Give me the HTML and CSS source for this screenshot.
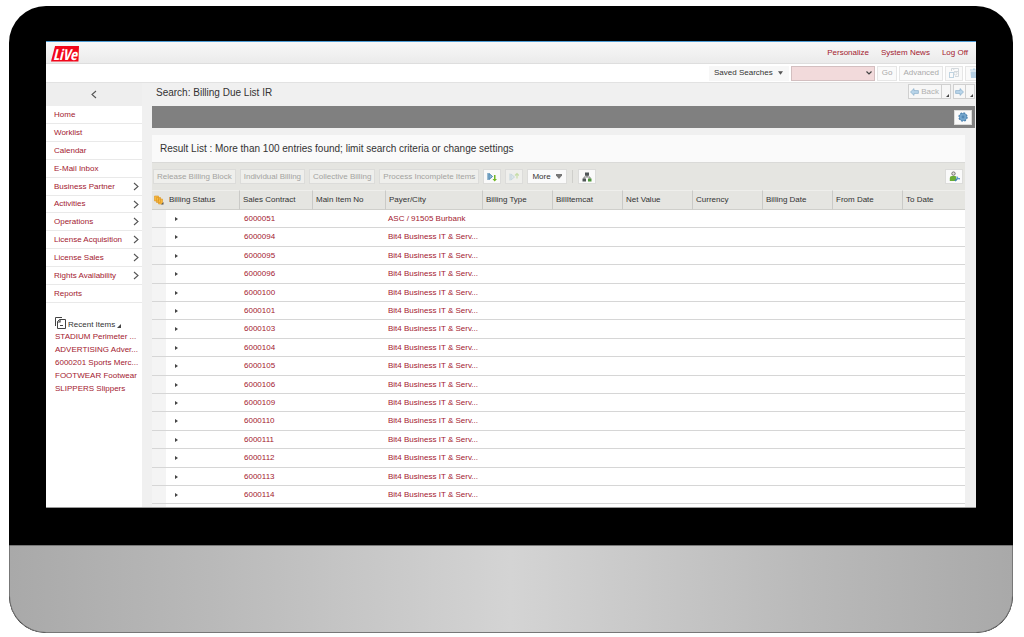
FILE: index.html
```html
<!DOCTYPE html>
<html lang="en">
<head>
<meta charset="utf-8">
<title>Search: Billing Due List IR</title>
<link rel="stylesheet" href="styles.css">
</head>
<body>
<svg class="defs" aria-hidden="true">
  <symbol id="chev" viewBox="0 0 6 9"><path d="M1 1l4 3.500-4 3.500" fill="none" stroke="#555" stroke-width="1.100"/></symbol>
  <symbol id="corner" viewBox="0 0 4 4"><path d="M4 0v4H0z" fill="#444"/></symbol>
  <symbol id="arrow" viewBox="0 0 9 8"><path d="M8.500 4L5 .6v2H.6v2.800H5v2z" fill="#b9d5ea" stroke="#86acc9" stroke-width=".7"/></symbol>
</svg>
<div class="device">
  <div class="bezel">
    <div class="screen">
      <header class="topbar">
        <a class="logo" href="#">LiVe</a>
        <nav class="toplinks"><a href="#">Personalize</a><a href="#">System News</a><a href="#">Log Off</a></nav>
      </header>
      <form class="searchbar">
        <button type="button" class="saved">Saved Searches <svg width="5" height="4" viewBox="0 0 6 4"><path d="M0 0h6L3 4z" fill="#555"/></svg></button>
        <span class="selwrap"><select aria-label="Saved search"><option></option></select><svg width="6" height="4" viewBox="0 0 6 4"><path d="M.5.5L3 3 5.500.5" fill="none" stroke="#444" stroke-width="1.200"/></svg></span>
        <button type="button" class="btn off go">Go</button>
        <button type="button" class="btn off">Advanced</button>
        <button type="button" class="btn icon" aria-label="Save search"><svg width="10" height="10" viewBox="0 0 10 10" fill="none" stroke="#d3d8dc"><path d="M2.500 3V.5h7v8H6M5 3.500h4M4 1.500l2-1"/><rect x=".5" y="4.500" width="4" height="5" stroke="#bfd3e1"/><circle cx="6.500" cy="5.500" r="1.500"/></svg></button>
        <button type="button" class="btn icon" aria-label="Delete search"><svg width="10" height="10" viewBox="0 0 10 10"><path d="M1 1.500h3V.5h2v1h3v1H1zM1.500 3.500h7L8 10H2z" fill="#b5cfe3"/></svg></button>
      </form>
      <div class="body">
        <aside class="side">
          <button type="button" class="collapse" aria-label="Collapse navigation"><svg class="flip" width="6" height="9"><use href="#chev"/></svg></button>
          <nav>
            <ul class="menu">
              <li><a href="#">Home</a></li>
              <li><a href="#">Worklist</a></li>
              <li><a href="#">Calendar</a></li>
              <li><a href="#">E-Mail Inbox</a></li>
              <li><a href="#">Business Partner<svg width="6" height="9"><use href="#chev"/></svg></a></li>
              <li><a href="#">Activities<svg width="6" height="9"><use href="#chev"/></svg></a></li>
              <li><a href="#">Operations<svg width="6" height="9"><use href="#chev"/></svg></a></li>
              <li><a href="#">License Acquisition<svg width="6" height="9"><use href="#chev"/></svg></a></li>
              <li><a href="#">License Sales<svg width="6" height="9"><use href="#chev"/></svg></a></li>
              <li><a href="#">Rights Availability<svg width="6" height="9"><use href="#chev"/></svg></a></li>
              <li><a href="#">Reports</a></li>
            </ul>
          </nav>
          <section class="recent">
            <h2><svg width="11" height="12" viewBox="0 0 11 12" fill="none" stroke="#444"><path d="M.5 9V.5H7M1 .5h1"/><path d="M4.500 2.500h6v9h-8v-7z" fill="#fff"/><path d="M5 2.500v2.500H2.500M5 8.500h3" stroke-width="1.200"/></svg><span>Recent Items</span><svg width="4" height="4"><use href="#corner"/></svg></h2>
            <ul>
              <li><a href="#">STADIUM Perimeter ...</a></li>
              <li><a href="#">ADVERTISING Adver...</a></li>
              <li><a href="#">6000201 Sports Merc...</a></li>
              <li><a href="#">FOOTWEAR Footwear</a></li>
              <li><a href="#">SLIPPERS Slippers</a></li>
            </ul>
          </section>
        </aside>
        <main class="main">
          <div class="titlebar">
            <h1>Search: Billing Due List IR</h1>
            <div class="history">
              <div class="group">
                <button type="button"><svg class="flip" width="9" height="8"><use href="#arrow"/></svg>Back</button>
                <button type="button" class="drop" aria-label="Back history"><svg width="3" height="3" viewBox="0 0 4 4"><use href="#corner"/></svg></button>
              </div>
              <div class="group">
                <button type="button" class="fwd" aria-label="Forward"><svg width="9" height="8"><use href="#arrow"/></svg></button>
                <button type="button" class="drop" aria-label="Forward history"><svg width="3" height="3" viewBox="0 0 4 4"><use href="#corner"/></svg></button>
              </div>
            </div>
          </div>
          <div class="criteria">
            <button type="button" class="btn icon" aria-label="Settings"><svg width="10" height="10" viewBox="0 0 10 10"><circle cx="5" cy="5" r="3.900" fill="#5c92bd" stroke="#4a80ae" stroke-width="1.600" stroke-dasharray="1.700 1.360"/><circle cx="5" cy="5" r="3.400" fill="#74a5cb"/><circle cx="5" cy="5" r="1.400" fill="#5288b5"/></svg></button>
          </div>
          <section class="results">
            <h2>Result List : More than 100 entries found; limit search criteria or change settings</h2>
            <div class="tools">
              <button type="button" class="btn dim">Release Billing Block</button>
              <button type="button" class="btn dim">Individual Billing</button>
              <button type="button" class="btn dim">Collective Billing</button>
              <button type="button" class="btn dim">Process Incomplete Items</button>
              <button type="button" class="btn icon" aria-label="Sort ascending"><svg width="10" height="10" viewBox="0 0 10 10"><path d="M1 1v7" stroke="#3f7eaa"/><path d="M2 1.500L5.500 4.500 2 7.500z" fill="#8fbad8" stroke="#3f7eaa" stroke-width=".9"/><path d="M7 3h1.500v4H10L7.700 9.500 5.500 7H7z" fill="#72b626"/></svg></button>
              <button type="button" class="btn icon dim" aria-label="Sort descending"><svg width="10" height="10" viewBox="0 0 10 10"><path d="M1 1.500v7" stroke="#c3d5dd"/><path d="M2 2L5.500 5 2 8z" fill="#dce6ea" stroke="#c3d5dd" stroke-width=".9"/><path d="M8 6.500V1.500M6 3.500l2-2 2 2" fill="none" stroke="#c6dda8" stroke-width="1.200"/></svg></button>
              <button type="button" class="btn more">More <svg width="6" height="5" viewBox="0 0 6 5"><path d="M0 0h6v1.500L3 5 0 1.500z" fill="#777"/></svg></button>
              <span class="sep"></span>
              <button type="button" class="btn icon" aria-label="Hierarchy"><svg width="10" height="10" viewBox="0 0 10 10"><path d="M2 7V5h6v2M5 5V3" fill="none" stroke="#666" stroke-width=".8"/><path d="M3 .5h4v3.200H3zM.5 6.500h3.500v3H.5z" fill="#4f5557"/><path d="M6 6.500h3.500v3H6z" fill="#4e963a"/></svg></button>
              <button type="button" class="btn icon user" aria-label="Personalize table"><svg width="11" height="11" viewBox="0 0 11 11"><circle cx="4.500" cy="2.600" r="1.700" fill="#e4e1dc" stroke="#666" stroke-width=".9"/><path d="M.8 10V7q0-2 2-2h3.500q1 0 1 2v3z" fill="#6aad37"/><path d="M6 10l3-3" stroke="#3f82b8" stroke-width="1.500"/><path d="M8 5.500q0 2.500 3 2.200" fill="none" stroke="#5a9ace" stroke-width="1.300"/></svg></button>
            </div>
            <table>
              <colgroup><col class="c-sel"><col class="c-id"><col class="c-id"><col class="c-id"><col class="c-payer"><col class="c-std"><col class="c-std"><col class="c-std"><col class="c-std"><col class="c-std"><col class="c-std"><col></colgroup>
              <thead><tr>
                <th class="pick"><svg width="10" height="10" viewBox="0 0 10 10" fill="#f7b940" stroke="#dc9524" stroke-width=".6"><path d="M.5 1h4v5h-4zM2.500 2.500h4v5h-4zM4.500 4h4v5h-4z"/><path d="M9.500 7v2.500H7z" fill="#555" stroke="none"/></svg></th>
                <th class="first">Billing Status</th><th>Sales Contract</th><th>Main Item No</th><th>Payer/City</th><th>Billing Type</th><th>BillItemcat</th><th>Net Value</th><th>Currency</th><th>Billing Date</th><th>From Date</th><th>To Date</th>
              </tr></thead>
              <tbody>
                <tr><td></td><td class="exp"></td><td><a href="#">6000051</a></td><td></td><td class="payer"><a href="#">ASC / 91505 Burbank</a></td><td colspan="7"></td></tr>
                <tr><td></td><td class="exp"></td><td><a href="#">6000094</a></td><td></td><td class="payer"><a href="#">Bit4 Business IT &amp; Serv...</a></td><td colspan="7"></td></tr>
                <tr><td></td><td class="exp"></td><td><a href="#">6000095</a></td><td></td><td class="payer"><a href="#">Bit4 Business IT &amp; Serv...</a></td><td colspan="7"></td></tr>
                <tr><td></td><td class="exp"></td><td><a href="#">6000096</a></td><td></td><td class="payer"><a href="#">Bit4 Business IT &amp; Serv...</a></td><td colspan="7"></td></tr>
                <tr><td></td><td class="exp"></td><td><a href="#">6000100</a></td><td></td><td class="payer"><a href="#">Bit4 Business IT &amp; Serv...</a></td><td colspan="7"></td></tr>
                <tr><td></td><td class="exp"></td><td><a href="#">6000101</a></td><td></td><td class="payer"><a href="#">Bit4 Business IT &amp; Serv...</a></td><td colspan="7"></td></tr>
                <tr><td></td><td class="exp"></td><td><a href="#">6000103</a></td><td></td><td class="payer"><a href="#">Bit4 Business IT &amp; Serv...</a></td><td colspan="7"></td></tr>
                <tr><td></td><td class="exp"></td><td><a href="#">6000104</a></td><td></td><td class="payer"><a href="#">Bit4 Business IT &amp; Serv...</a></td><td colspan="7"></td></tr>
                <tr><td></td><td class="exp"></td><td><a href="#">6000105</a></td><td></td><td class="payer"><a href="#">Bit4 Business IT &amp; Serv...</a></td><td colspan="7"></td></tr>
                <tr><td></td><td class="exp"></td><td><a href="#">6000106</a></td><td></td><td class="payer"><a href="#">Bit4 Business IT &amp; Serv...</a></td><td colspan="7"></td></tr>
                <tr><td></td><td class="exp"></td><td><a href="#">6000109</a></td><td></td><td class="payer"><a href="#">Bit4 Business IT &amp; Serv...</a></td><td colspan="7"></td></tr>
                <tr><td></td><td class="exp"></td><td><a href="#">6000110</a></td><td></td><td class="payer"><a href="#">Bit4 Business IT &amp; Serv...</a></td><td colspan="7"></td></tr>
                <tr><td></td><td class="exp"></td><td><a href="#">6000111</a></td><td></td><td class="payer"><a href="#">Bit4 Business IT &amp; Serv...</a></td><td colspan="7"></td></tr>
                <tr><td></td><td class="exp"></td><td><a href="#">6000112</a></td><td></td><td class="payer"><a href="#">Bit4 Business IT &amp; Serv...</a></td><td colspan="7"></td></tr>
                <tr><td></td><td class="exp"></td><td><a href="#">6000113</a></td><td></td><td class="payer"><a href="#">Bit4 Business IT &amp; Serv...</a></td><td colspan="7"></td></tr>
                <tr><td></td><td class="exp"></td><td><a href="#">6000114</a></td><td></td><td class="payer"><a href="#">Bit4 Business IT &amp; Serv...</a></td><td colspan="7"></td></tr>
                <tr><td></td><td colspan="11"></td></tr>
              </tbody>
            </table>
          </section>
        </main>
      </div>
    </div>
  </div>
  <div class="chin"></div>
</div>
</body>
</html>
```
FILE: styles.css
```css
* { box-sizing: border-box; }
body {
  margin: 0;
  padding: 6px 11px 4px 9px;
  height: 100vh;
  background: #fff;
  color: #333;
  font: 8px/10px "Liberation Sans", Arial, sans-serif;
}
h1, h2, ul { margin: 0; padding: 0; font-weight: normal; }
ul { list-style: none; }
a { color: #a3202f; text-decoration: none; }
button, select { margin: 0; font: inherit; color: inherit; }
svg { flex: none; display: block; }
.defs { display: none; }
.flip { transform: scaleX(-1); }

.device {
  display: flex;
  flex-direction: column;
  height: 100%;
  border-radius: 37px;
  overflow: hidden;
  background: #000;
}
.bezel { flex: 1; min-height: 0; display: flex; padding: 35px 37px 37px; }
.screen {
  flex: 1;
  min-width: 0;
  display: flex;
  flex-direction: column;
  overflow: hidden;
  background: #fff;
  border-bottom: 1px solid #999;
}
.chin {
  height: 88px;
  flex: none;
  border: 1px solid #777;
  border-radius: 0 0 37px 37px;
  background: linear-gradient(90deg, #a9a9a9, #b9b9b9 20%, #d4d4d4 50%, #b9b9b9 80%, #a9a9a9);
}

.topbar {
  display: flex;
  justify-content: space-between;
  align-items: center;
  flex: none;
  height: 23px;
  padding: 0 8px 0 5px;
  border-top: 1px solid #4d9bd3;
  border-bottom: 1px solid #dedede;
  background: linear-gradient(#f8f8f8, #ebebeb);
}
.logo {
  width: 28px;
  height: 16px;
  margin-top: 2px;
  background: #f2061a;
  clip-path: polygon(15% 0, 100% 0, 98% 100%, 0 100%);
  color: #fff;
  font: italic bold 15px/16px "Liberation Sans Narrow", "Open Sans Condensed", "DejaVu Sans Condensed", sans-serif;
  text-align: center;
}
.toplinks { display: flex; gap: 12px; }

.searchbar {
  display: flex;
  flex: none;
  justify-content: flex-end;
  align-items: center;
  gap: 2px;
  height: 18px;
  margin-right: -7px;
}
.btn, .saved {
  display: flex;
  align-items: center;
  justify-content: center;
  height: 15px;
  padding: 0 3px;
  border: 1px solid #dcdcda;
  background: #fafafa;
  white-space: nowrap;
}
.saved { gap: 5px; padding: 0 5px 0 4px; border-color: #f7f7f7; background: #f7f7f7; }
.off { color: #aaa; border-color: #e6e6e6; }
.go { padding: 0 4px; }
.dim { color: #a3a3a0; background: #efefec; }
.icon { width: 18px; padding: 0; }
.searchbar .icon { border-color: #e6e6e6; }
.selwrap { display: grid; align-items: center; }
.selwrap > * { grid-area: 1 / 1; }
.selwrap svg { justify-self: end; margin-right: 3px; pointer-events: none; }
select {
  appearance: none;
  width: 84px;
  height: 15px;
  padding: 0 12px 0 3px;
  border: 1px solid #d3bfc0;
  border-radius: 0;
  background: #f2dadb;
}

.body { display: flex; flex: 1; min-height: 0; background: #f0f0f0; border-top: 1px solid #e2e2e2; }
.side { width: 96px; flex: none; background: #fff; }
.collapse {
  display: flex;
  align-items: center;
  justify-content: center;
  width: 100%;
  height: 23px;
  padding: 0;
  border: 0;
  background: #eee;
}
.menu a {
  display: flex;
  align-items: center;
  justify-content: space-between;
  height: 18px;
  padding: 0 3px 0 8px;
  border-bottom: 1px solid #e9e9e9;
}
.menu li:nth-child(6n) a { height: 17px; }
.recent { padding: 14px 4px 0 9px; }
.recent h2 { display: flex; align-items: flex-end; gap: 2px; height: 13px; font-size: 8px; }
.recent h2 > :first-child { align-self: flex-start; }
.recent h2 > :last-child { margin-bottom: 2px; }
.recent li { line-height: 13px; white-space: nowrap; }

.main { flex: 1; min-width: 0; padding-left: 10px; }
.titlebar { display: flex; justify-content: space-between; height: 23px; padding: 1px 1px 0 4px; }
h1 { font-size: 10px; line-height: 17px; }
.history { display: flex; gap: 2px; }
.group { display: flex; height: 15px; border: 1px solid #d0d0d0; background: #f7f7f7; }
.group button {
  display: flex;
  align-items: center;
  gap: 2px;
  padding: 0 2px 0 1px;
  border: 0;
  background: none;
  color: #b0b0b0;
}
.group .drop { width: 9px; padding: 7px 0 0 4px; border-left: 1px solid #d0d0d0; }
.group .fwd { padding: 0 1px; }

.criteria {
  display: flex;
  align-items: center;
  justify-content: flex-end;
  height: 22px;
  margin-right: 1px;
  padding-right: 3px;
  background: #808080;
}
.results { margin: 7px 11px 0 0; background: #fff; }
.results h2 { padding-left: 8px; font-size: 10px; line-height: 27px; background: #fafafa; border-bottom: 1px solid #dadad8; }
.tools { display: flex; align-items: center; gap: 4px; height: 27px; padding: 0 2px 0 1px; background: #e5e5e1; }
.tools .more { gap: 5px; padding: 0 4px; }
.tools .user { margin-left: auto; }
.sep { width: 1px; height: 13px; margin: 0 1px; background: #cfcfcb; }

table { width: 100%; table-layout: fixed; border-collapse: separate; border-spacing: 0; }
.c-sel { width: 14px; }
.c-id { width: 73px; }
.c-payer { width: 97px; }
.c-std { width: 70px; }
th {
  height: 20px;
  padding: 0 0 0 3px;
  border-top: 1px solid #efefec;
  border-bottom: 1px solid #cfcfcb;
  border-left: 1px solid #cacac7;
  background: #e5e5e1;
  font-weight: normal;
  text-align: left;
  white-space: nowrap;
}
th.pick { padding: 0 0 0 2px; }
th.pick, th.first { border-left: 0; }
td { height: 18px; padding: 0 0 0 5px; border-bottom: 1px solid #d6d6d6; white-space: nowrap; }
tr:nth-child(5n+2) td, tr:nth-child(5n+4) td { height: 19px; }
td:first-child { background: #f4f4f4; }
td.payer { padding-left: 3px; }
td.exp { padding-left: 9px; }
td.exp::before {
  content: "";
  display: block;
  width: 0;
  border: 2px solid transparent;
  border-left: 3px solid #444;
  border-right: 0;
}
```
